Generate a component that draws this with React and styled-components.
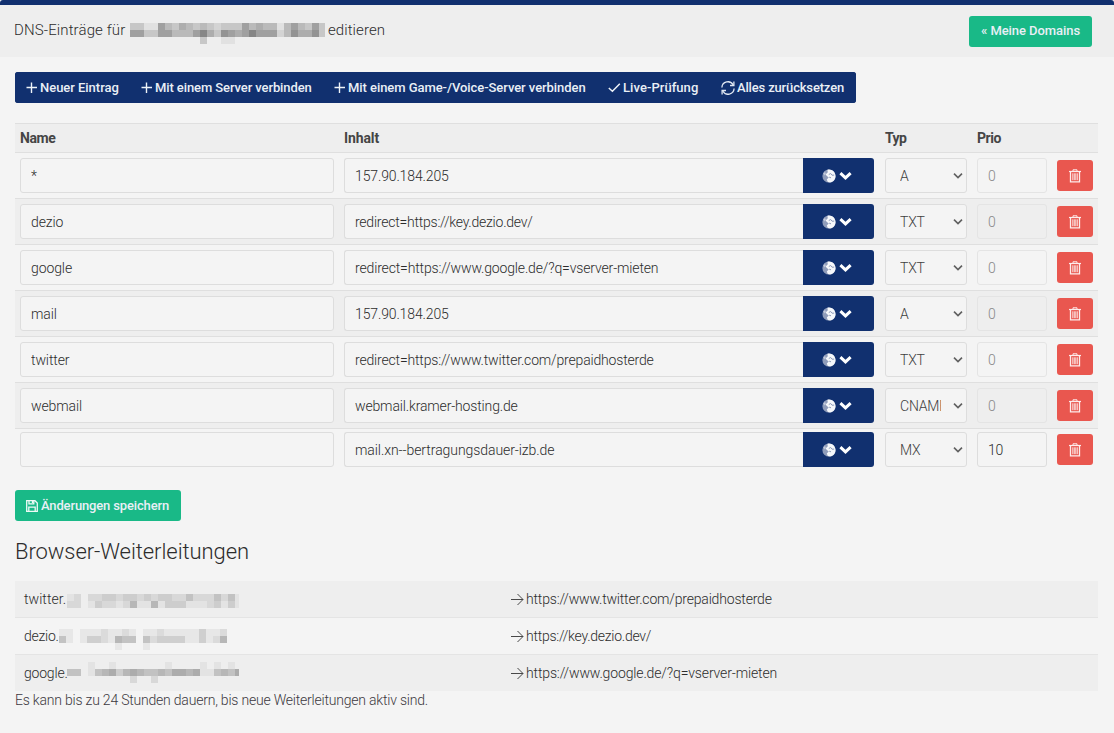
import React from "react";
import styled, { createGlobalStyle } from "styled-components";

const navy = "#11306f";
const green = "#19b987";
const red = "#e9574f";

const GlobalStyle = createGlobalStyle`
  * { box-sizing: border-box; }
  body {
    margin: 0;
    background: #f4f4f4;
    color: #2c2c2c;
    font: 300 14px/20px Roboto, sans-serif;
  }
`;

const Page = styled.div`
  height: 733px;
  overflow: hidden;
  border-top: 5px solid ${navy};
  border-radius: 3px 3px 0 0;
`;

const Header = styled.header`
  display: flex;
  align-items: center;
  justify-content: space-between;
  height: 52px;
  padding: 0 22px 0 14px;
  background: #eeeeee;
`;

const Title = styled.h1`
  display: flex;
  margin: 0 0 -2px;
  font-size: 15px;
  font-weight: 300;
  line-height: 20px;
`;

const TitleStart = styled.span`
  width: 116px;
  letter-spacing: 0.12px;
`;

const TitleEnd = styled.span`
  margin-left: 3px;
  letter-spacing: 0.08px;
`;

const Button = styled.button`
  display: inline-flex;
  align-items: center;
  gap: ${(p) => p.$gap ?? 2}px;
  height: 31px;
  width: ${(p) => p.$width}px;
  padding: 0 0 0 ${(p) => p.$pad ?? 11}px;
  border: 0;
  border-radius: ${(p) => (p.$flat ? 0 : "3px")};
  background: ${(p) => p.$bg};
  color: #e9eff6;
  font: 500 13px/20px Roboto, sans-serif;
  letter-spacing: ${(p) => p.$track ?? -0.1}px;
  white-space: nowrap;
  svg { flex: none; }
`;

const Body = styled.main`
  padding: 15px 16px 0 15px;
`;

const Toolbar = styled.div`
  display: flex;
  width: 841px;
  margin-bottom: 20px;
  border-radius: 3px;
  overflow: hidden;
  background: ${navy};
`;

const Records = styled.section`
  width: 1083px;
`;

const columns = `
  display: grid;
  grid-template-columns: 314px 530px 83px 70px 36px;
  column-gap: 10px;
`;

const HeadRow = styled.div`
  ${columns}
  height: 29px;
  padding: 4px 5px;
  border-top: 1px solid #dfdfdf;
  background: #eeeeee;
  color: #454545;
  font-weight: 700;
`;

const HeadCell = styled.div`
  letter-spacing: ${(p) => p.$track}px;
  padding-left: ${(p) => p.$pad ?? 0}px;
`;

const Row = styled.div`
  ${columns}
  align-items: center;
  height: ${(p) => (p.$compact ? 42 : 46)}px;
  padding: ${(p) => (p.$compact ? "3px 5px" : "5px")};
  border-top: 1px solid #dfdfdf;
  background: ${(p) => (p.$striped ? "#eeeeee" : "transparent")};
`;

const Field = styled.input`
  width: 100%;
  min-width: 0;
  height: 35px;
  padding: 1px 10px 0;
  border: 1px solid #dddddd;
  border-radius: 3px;
  background: #f4f4f4;
  color: #2c2c2c;
  font: 300 14px/20px Roboto, sans-serif;
  letter-spacing: ${(p) => p.$track ?? -0.15}px;
  outline: 0;
  &:disabled {
    border-color: #e4e4e4;
    background: transparent;
    color: #888888;
  }
`;

const ContentGroup = styled.div`
  display: flex;
  ${Field} {
    flex: 1;
    border-right: 0;
    border-radius: 3px 0 0 3px;
  }
`;

const TargetButton = styled.button`
  display: flex;
  align-items: center;
  justify-content: center;
  gap: 3px;
  width: 71px;
  height: 35px;
  padding: 0 3px 0 0;
  border: 0;
  border-radius: 0 3px 3px 0;
  background: ${navy};
`;

const Select = styled.div`
  display: flex;
  align-items: center;
  justify-content: space-between;
  width: 82px;
  height: 35px;
  margin-left: 1px;
  padding: 0 3px 0 14px;
  border: 1px solid #dddddd;
  border-radius: 3px;
  background: #f4f4f4;
  color: #404040;
`;

const SelectText = styled.span`
  width: 41px;
  padding-top: 1px;
  overflow: hidden;
  white-space: nowrap;
  letter-spacing: -0.2px;
`;

const DeleteButton = styled.button`
  display: flex;
  align-items: center;
  justify-content: center;
  width: 36px;
  height: 31px;
  padding: 0 1px 0 0;
  border: 0;
  border-radius: 3px;
  background: ${red};
`;

const SaveBar = styled.div`
  display: flex;
  margin-top: 20px;
`;

const Heading = styled.h2`
  margin: 16px 0 15px;
  font-size: 22px;
  font-weight: 300;
  line-height: 29px;
  letter-spacing: -0.07px;
`;

const Redirects = styled.section`
  width: 1083px;
`;

const RedirectRow = styled.div`
  display: grid;
  grid-template-columns: 487px 1fr;
  align-items: center;
  height: ${(p) => (p.$first ? 36 : 37)}px;
  padding-left: 9px;
  border-top: ${(p) => (p.$first ? "0" : "1px solid #e4e4e4")};
  background: ${(p) => (p.$striped ? "#eeeeee" : "transparent")};
`;

const Source = styled.div`
  display: flex;
  align-items: center;
`;

const Prefix = styled.span`
  width: ${(p) => p.$width}px;
  letter-spacing: ${(p) => p.$track}px;
`;

const Target = styled.div`
  display: flex;
  align-items: center;
  gap: 2px;
  letter-spacing: ${(p) => p.$track}px;
`;

const Note = styled.p`
  margin: -1px 0 0;
  color: #3c3840;
  letter-spacing: -0.21px;
`;

const MosaicSvg = styled.svg`
  display: block;
  flex: none;
  margin-top: ${(p) => p.$shift}px;
`;

/* Pixelated block that hides a domain name; each digit is a cell's darkness. */
function Mosaic({ rows, shift = 0, base = 238, step = 13, trim = 0 }) {
  return (
    <MosaicSvg
      $shift={shift}
      width={rows[0].length * 7 - trim}
      height={rows.length * 7}
      shapeRendering="crispEdges"
    >
      {rows.flatMap((row, y) =>
        [...row].map((level, x) => {
          if (level === "0") return null;
          const v = base - Number(level) * step;
          return <rect key={`${x}-${y}`} x={x * 7} y={y * 7} width="7" height="7" fill={`rgb(${v},${v},${v})`} />;
        })
      )}
    </MosaicSvg>
  );
}

const Plus = () => (
  <svg width="12" height="12" viewBox="0 0 12 12" stroke="#eef3f8" strokeWidth="1.4">
    <path d="M5.500 .5v10.500M.5 5.500h10.500" />
  </svg>
);

const Check = () => (
  <svg width="13" height="12" viewBox="0 0 13 12" fill="none" stroke="#eef3f8" strokeWidth="1.5">
    <path d="M.8 6 4.400 9.300l7.400-7.500" />
  </svg>
);

const Reload = () => (
  <svg width="14" height="14" viewBox="0 0 14 14" fill="none" stroke="#dfe7f2" strokeWidth="1.3">
    <path d="M.9 6.500A6 6 0 0 1 12.200 4M13.100 7.500A6 6 0 0 1 1.800 10" />
    <path d="M12.900.6v3.900H9M1.100 13.400V9.500h3.900" />
  </svg>
);

const Save = () => (
  <svg width="12" height="12" viewBox="0 0 12 12" fill="none" stroke="#eefaf6" strokeWidth="1.3">
    <path d="M.7.7h8.300l2.300 2.300v8.300H.7z" />
    <path d="M3 .7v3.200h4.800V.7M2.800 11.300V7.200h6.400v4.100" />
    <path d="M6.500 1v2" />
  </svg>
);

const Globe = () => (
  <svg width="14" height="14" viewBox="0 0 14 14">
    <circle cx="7" cy="7" r="6.6" fill="#8f9cba" />
    <path d="M5.400 .8C9.500-.3 13.300 2.800 13.500 7c.1 3.200-2.200 6-5.500 6.500L5.800 13l-1-2.600L6.700 8.600 4.900 7 3.600 5.500 5.800 3.200z" fill="#f6f8fb" />
    <path d="M1.300 4.500 3 3l.8 1.800-1 1.700z" fill="#c3cadb" />
    <path d="M6.800 5.500l1.900-1 1.300 1.700 2.200-.1M7.200 8.200l1.800.6" stroke="#8f9cba" strokeWidth="1" fill="none" />
  </svg>
);

const ChevronBold = () => (
  <svg width="13" height="9" viewBox="0 0 13 9" fill="none" stroke="#fff" strokeWidth="3">
    <path d="M1.400 2.200 6.500 6.900l5.100-4.700" />
  </svg>
);

const ChevronThin = () => (
  <svg width="10" height="6" viewBox="0 0 10 6" fill="none" stroke="#606060" strokeWidth="1.600">
    <path d="M1 .6l4 4 4-4" />
  </svg>
);

const Trash = () => (
  <svg width="12" height="14" viewBox="0 0 12 14" fill="none" stroke="#fdeceb">
    <path d="M0 2.500h12" strokeWidth="1.200" />
    <path d="M4 2.500V.8h4v1.700" />
    <path d="M1.500 2.500v10.300h9V2.500" strokeWidth="1.300" />
    <path d="M3.800 4.300v6.900M5.300 4.300v6.900M6.800 4.300v6.900M8.300 4.300v6.900" strokeWidth=".9" />
  </svg>
);

const Arrow = () => (
  <svg width="13" height="13" viewBox="0 0 13 13" fill="none" stroke="#484848" strokeWidth="1">
    <path d="M0 6.500h12M6.500 1l5.500 5.500L6.500 12" />
  </svg>
);

const records = [
  { name: "*", content: "157.90.184.205", type: "A", track: -0.13 },
  { name: "dezio", content: "redirect=https://key.dezio.dev/", type: "TXT", track: -0.23 },
  { name: "google", content: "redirect=https://www.google.de/?q=vserver-mieten", type: "TXT" },
  { name: "mail", content: "157.90.184.205", type: "A", track: -0.13 },
  { name: "twitter", content: "redirect=https://www.twitter.com/prepaidhosterde", type: "TXT", track: -0.17 },
  { name: "webmail", content: "webmail.kramer-hosting.de", type: "CNAME" },
  { name: "", content: "mail.xn--bertragungsdauer-izb.de", type: "MX", prio: 10, track: -0.07 },
];

const redirects = [
  {
    prefix: "twitter.", width: 43, track: 0.05, shift: 3, trim: 3, step: 11,
    url: "https://www.twitter.com/prepaidhosterde", urlTrack: -0.18,
    cells: ["1202233233232332242224241", "2201322125115133311123131"],
  },
  {
    prefix: "dezio.", width: 35, track: -0.25, shift: 6, base: 243, step: 12,
    url: "https://key.dezio.dev/", urlTrack: -0.25,
    cells: ["110111211210112111113112", "410133215440423333113125", "000000001000100000000000"],
  },
  {
    prefix: "google.", width: 43, track: -0.2, shift: -1, trim: 3, step: 11,
    url: "https://www.google.de/?q=vserver-mieten", urlTrack: -0.14,
    cells: ["0001001000000010000101010", "4401456356544546656114546", "0000000002002000000000000"],
  },
];

export default function App() {
  return (
    <>
      <GlobalStyle />
      <Page>
        <Header>
          <Title>
            <TitleStart>DNS-Einträge für</TitleStart>
            <Mosaic
              shift={3}
              trim={1}
              rows={["3311643543432333645441464363", "6633664446853765686662475573", "0000000000300110000000000000"]}
            />
            <TitleEnd>editieren</TitleEnd>
          </Title>
          <Button $bg={green} $width={123} $pad={12} $track={-0.07}>« Meine Domains</Button>
        </Header>
        <Body>
          <Toolbar>
            <Button $bg={navy} $width={115} $flat $track={-0.03}><Plus />Neuer Eintrag</Button>
            <Button $bg={navy} $width={193} $flat><Plus />Mit einem Server verbinden</Button>
            <Button $bg={navy} $width={274} $flat $track={-0.06}><Plus />Mit einem Game-/Voice-Server verbinden</Button>
            <Button $bg={navy} $width={113} $flat $track={0.06}><Check />Live-Prüfung</Button>
            <Button $bg={navy} $width={146} $flat $track={-0.16}><Reload />Alles zurücksetzen</Button>
          </Toolbar>

          <Records>
            <HeadRow>
              <HeadCell $track={-0.45}>Name</HeadCell>
              <HeadCell $track={-0.12}>Inhalt</HeadCell>
              <HeadCell $track={-0.6} $pad={1}>Typ</HeadCell>
              <HeadCell $track={-0.45}>Prio</HeadCell>
            </HeadRow>
            {records.map((r, i) => (
              <Row key={i} $striped={i % 2 === 1} $compact={i === records.length - 1}>
                <Field defaultValue={r.name} $track={-0.1} />
                <ContentGroup>
                  <Field defaultValue={r.content} $track={r.track} />
                  <TargetButton><Globe /><ChevronBold /></TargetButton>
                </ContentGroup>
                <Select><SelectText>{r.type}</SelectText><ChevronThin /></Select>
                <Field defaultValue={r.prio ?? 0} disabled={r.prio === undefined} />
                <DeleteButton><Trash /></DeleteButton>
              </Row>
            ))}
          </Records>

          <SaveBar>
            <Button $bg={green} $width={166} $gap={3} $track={-0.15}><Save />Änderungen speichern</Button>
          </SaveBar>

          <Heading>Browser-Weiterleitungen</Heading>
          <Redirects>
            {redirects.map((r, i) => (
              <RedirectRow key={r.url} $first={i === 0} $striped={i % 2 === 0}>
                <Source>
                  <Prefix $width={r.width} $track={r.track}>{r.prefix}</Prefix>
                  <Mosaic rows={r.cells} shift={r.shift} base={r.base} step={r.step} trim={r.trim} />
                </Source>
                <Target $track={r.urlTrack}><Arrow />{r.url}</Target>
              </RedirectRow>
            ))}
          </Redirects>
          <Note>Es kann bis zu 24 Stunden dauern, bis neue Weiterleitungen aktiv sind.</Note>
        </Body>
      </Page>
    </>
  );
}
